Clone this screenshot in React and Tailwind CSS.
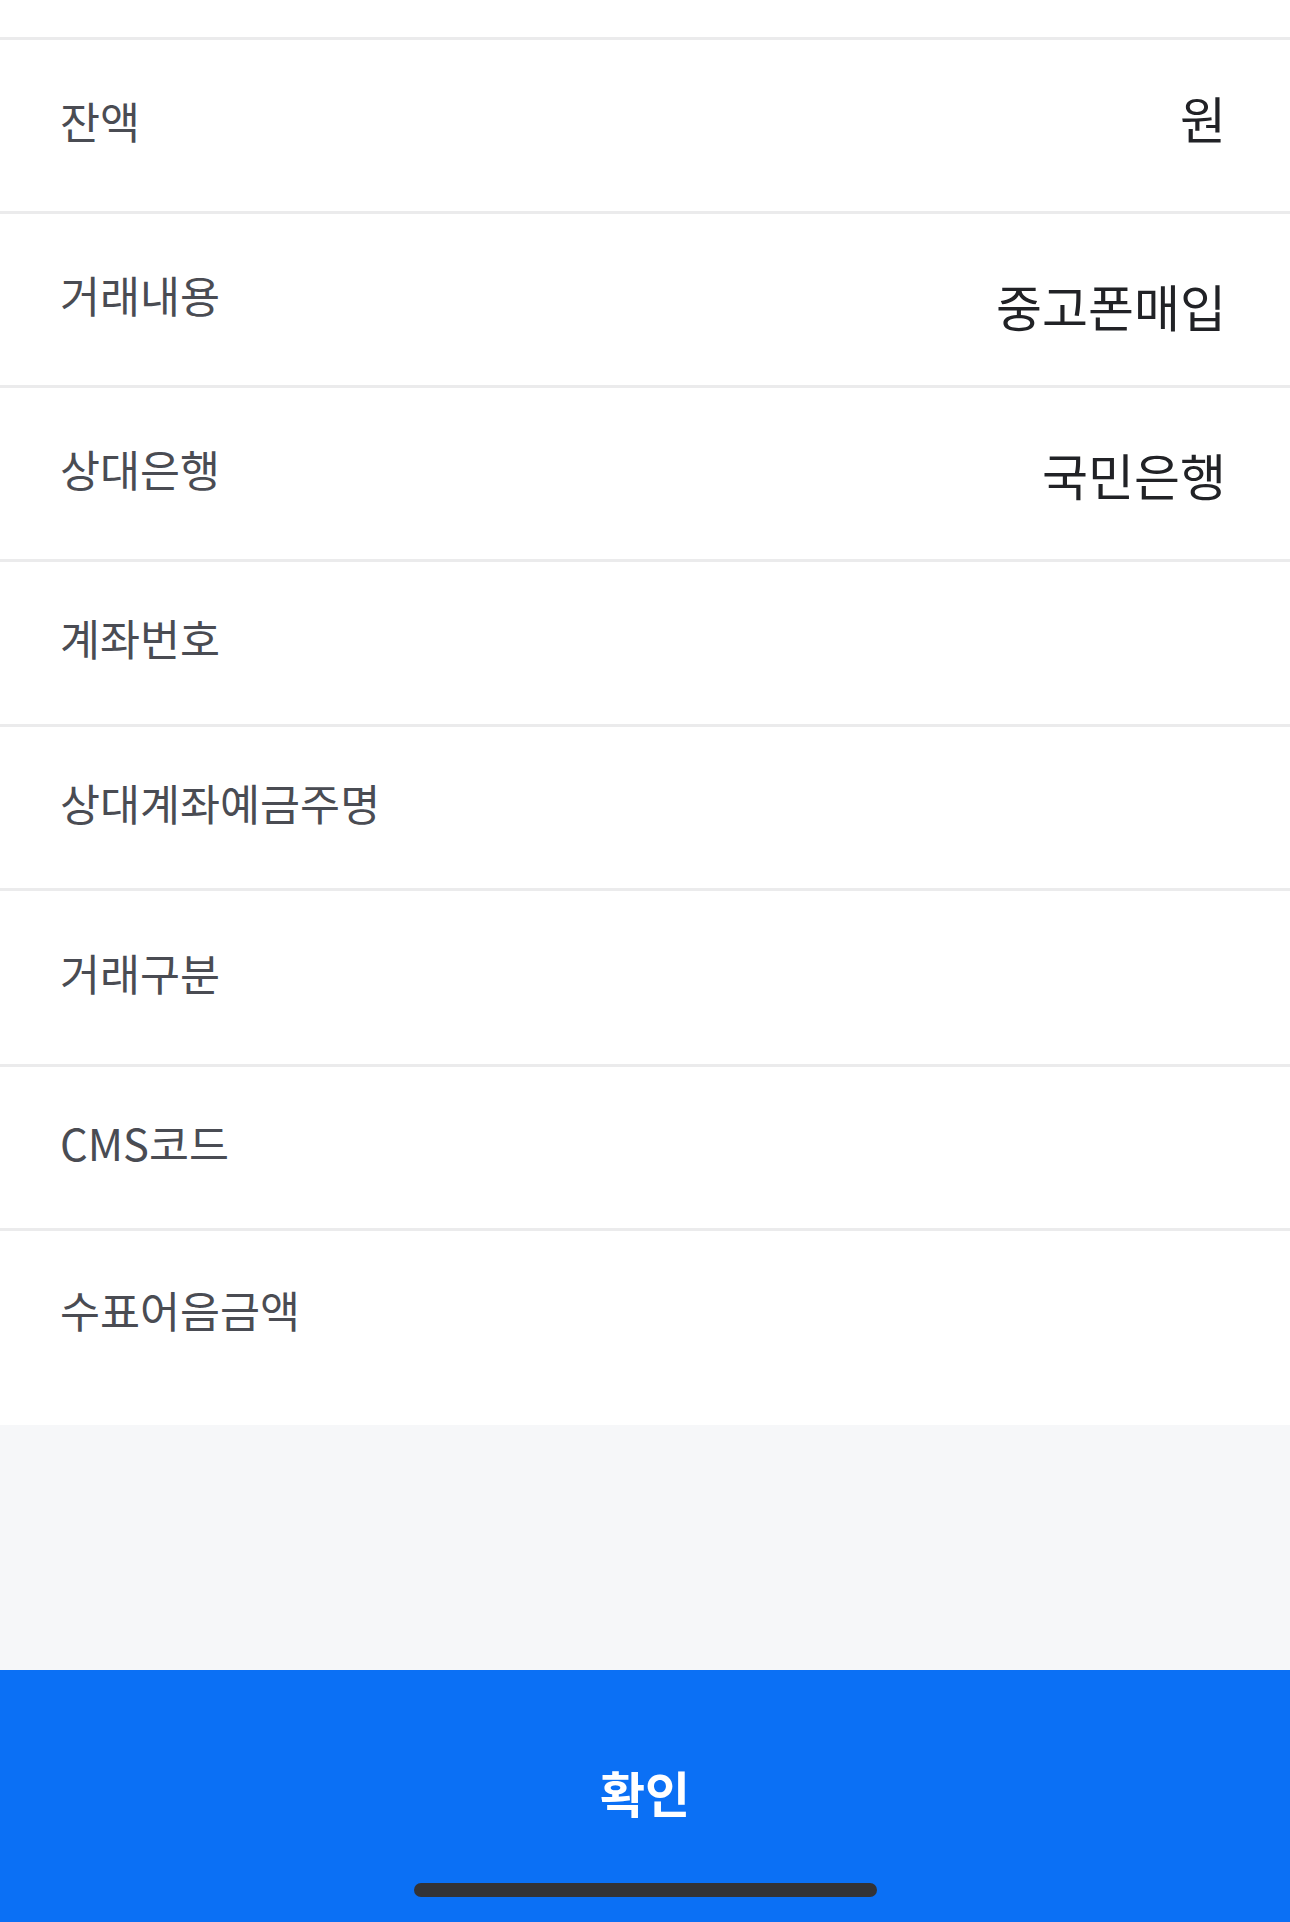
export default function App() {
  const font = { fontFamily: '"Noto Sans CJK KR", "Noto Sans", sans-serif' };
  const rows = [
    { label: "잔액", value: "원", h: "h-[174px]", vcls: "mb-[18px]" },
    { label: "거래내용", value: "중고폰매입", h: "h-[174px]", vcls: "mt-[10px]" },
    { label: "상대은행", value: "국민은행", h: "h-[174px]", vcls: "" },
    { label: "계좌번호", value: "", h: "h-[165px]", vcls: "" },
    { label: "상대계좌예금주명", value: "", h: "h-[164px]", vcls: "" },
    { label: "거래구분", value: "", h: "h-[176px]", vcls: "" },
    { label: "CMS코드", value: "", h: "h-[164px]", vcls: "" },
  ];
  return (
    <div className="w-[1290px] min-h-[1922px] bg-white flex flex-col" style={font}>
      <div className="h-[37px] bg-white" />
      {rows.map((r) => (
        <div
          key={r.label}
          className={`${r.h} flex items-center justify-between border-t-[3px] border-[#ebebec] pl-[60px] pr-[64px]`}
        >
          <span className="text-[43.5px] leading-[50px] text-[#4a4c53] mb-[10px]">{r.label}</span>
          {r.value ? (
            <span className={`text-[50px] leading-[56px] text-[#212226] ${r.vcls}`}>{r.value}</span>
          ) : null}
        </div>
      ))}
      <div className="h-[197px] pb-[27px] flex items-center border-t-[3px] border-[#ebebec] pl-[60px] pr-[64px]">
        <span className="text-[43.5px] leading-[50px] text-[#4a4c53] mb-[10px]">수표어음금액</span>
      </div>
      <div className="h-[245px] bg-[#f6f7f9]" />
      <div className="h-[252px] bg-[#0b70f5] flex flex-col items-center">
        <div className="pt-[97px] text-[49px] leading-[50px] font-bold text-white">확인</div>
        <div className="mt-[66px] h-[14px] w-[463px] rounded-full bg-[#333336]" />
      </div>
    </div>
  );
}
